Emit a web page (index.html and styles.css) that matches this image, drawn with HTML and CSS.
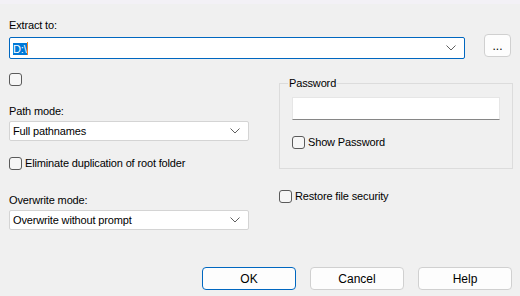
FILE: index.html
```html
<!DOCTYPE html>
<html lang="en">
<head>
    <meta charset="UTF-8">
    <meta name="viewport" content="width=device-width, initial-scale=1.0">
    <title>Extraction path and options</title>
    <link rel="stylesheet" href="styles.css">
</head>
<body>
    <div class="top-strip"></div>

    <div class="dialog">
        <!-- Destination -->
        <div class="field-label extract-label">Extract to:</div>
        <div class="dest-row">
            <div class="combo focused">
                <span class="combo-text"><span class="selected">D:\</span><span class="caret"></span></span>
                <svg class="chevron" width="10" height="6" viewBox="0 0 10 6"><path d="M0.5 0.5 L5 5 L9.5 0.5" fill="none" stroke="#606060" stroke-width="1"/></svg>
            </div>
            <button class="btn browse-btn">...</button>
        </div>

        <div class="columns">
            <!-- Left column -->
            <div class="col-left">
                <label class="check lone-check"><input type="checkbox"></label>

                <div class="field-label">Path mode:</div>
                <div class="combo select">
                    <span class="combo-text">Full pathnames</span>
                    <svg class="chevron" width="10" height="6" viewBox="0 0 10 6"><path d="M0.5 0.5 L5 5 L9.5 0.5" fill="none" stroke="#606060" stroke-width="1"/></svg>
                </div>

                <label class="check eliminate-check"><input type="checkbox"><span>Eliminate duplication of root folder</span></label>

                <div class="field-label">Overwrite mode:</div>
                <div class="combo select">
                    <span class="combo-text">Overwrite without prompt</span>
                    <svg class="chevron" width="10" height="6" viewBox="0 0 10 6"><path d="M0.5 0.5 L5 5 L9.5 0.5" fill="none" stroke="#606060" stroke-width="1"/></svg>
                </div>
            </div>

            <!-- Right column -->
            <div class="col-right">
                <fieldset class="password-group">
                    <legend>Password</legend>
                    <div class="password-input"></div>
                    <label class="check"><input type="checkbox"><span>Show Password</span></label>
                </fieldset>

                <label class="check restore-check"><input type="checkbox"><span>Restore file security</span></label>
            </div>
        </div>

        <div class="button-row">
            <button class="btn default-btn">OK</button>
            <button class="btn">Cancel</button>
            <button class="btn">Help</button>
        </div>
    </div>
</body>
</html>
```

FILE: styles.css
```css
body {
    margin: 0;
    background-color: #f0f0f0;
    font-family: 'Liberation Sans', Arial, sans-serif;
    font-size: 11px;
    letter-spacing: -0.15px;
    color: #000000;
}
.top-strip {
    height: 4px;
    background-color: #f3f1f6;
}
.dialog {
    padding: 0 7px 0 9px;
}
.field-label {
    line-height: 14px;
}
.extract-label {
    margin-top: 14px;
}
.dest-row {
    display: flex;
    align-items: flex-start;
    margin-top: 2px;
}
.combo {
    box-sizing: border-box;
    display: flex;
    align-items: center;
    justify-content: space-between;
    background-color: #ffffff;
    border: 1px solid #d4d4d4;
    border-radius: 2px;
    padding: 0 8px 0 3px;
}
.combo.focused {
    width: 456px;
    height: 22px;
    margin-top: 3px;
    border-color: #0067c0;
}
.combo .chevron {
    flex-shrink: 0;
}
.selected {
    background-color: #0078d7;
    color: #ffffff;
}
.caret {
    display: inline-block;
    width: 1px;
    height: 13px;
    background-color: #f08020;
    vertical-align: -2px;
}
.btn {
    box-sizing: border-box;
    width: 94px;
    height: 23px;
    background-color: #fdfdfd;
    border: 1px solid #d0d0d0;
    border-radius: 4px;
    font-family: inherit;
    font-size: 12px;
    color: #000000;
    padding: 0;
}
.browse-btn {
    width: 27px;
    margin-left: 19px;
    line-height: 12px;
}
.default-btn {
    border-color: #0067c0;
}
.columns {
    display: flex;
    gap: 30px;
}
.col-left {
    width: 240px;
    display: flex;
    flex-direction: column;
}
.col-right {
    width: 234px;
    display: flex;
    flex-direction: column;
}
.check {
    display: flex;
    align-items: center;
    gap: 3px;
    line-height: 14px;
}
.check input {
    appearance: none;
    -webkit-appearance: none;
    box-sizing: border-box;
    width: 13px;
    height: 13px;
    margin: 0;
    border: 1px solid #5a5a5a;
    border-radius: 3px;
    background-color: #f6f6f6;
}
.lone-check {
    margin-top: 14px;
    margin-bottom: 18px;
}
.select {
    height: 20px;
    margin-top: 3px;
}
.eliminate-check {
    margin-top: 15px;
    margin-bottom: 23px;
}
.password-group {
    box-sizing: border-box;
    height: 92px;
    margin: 18px 0 0 0;
    padding: 8px 12px 0 12px;
    border: 1px solid #dcdcdc;
    border-radius: 0;
}
.password-group legend {
    padding: 0 1px;
    margin-left: -4px;
}
.password-input {
    box-sizing: border-box;
    height: 23px;
    background-color: #ffffff;
    border: 1px solid #e6e6e6;
    border-bottom-color: #868686;
    margin-bottom: 15px;
}
.restore-check {
    margin-top: 20px;
}
.button-row {
    display: flex;
    justify-content: flex-end;
    gap: 14px;
    margin-top: 37px;
    padding-right: 1px;
}
```
